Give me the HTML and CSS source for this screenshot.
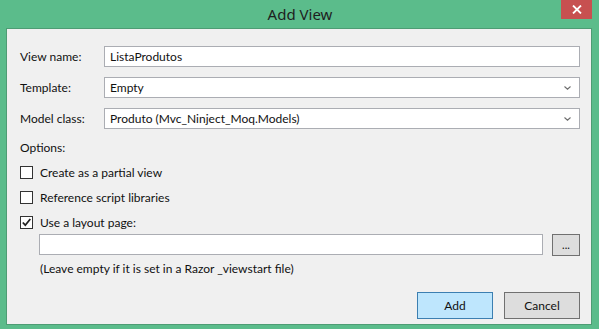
FILE: index.html
```html
<!DOCTYPE html>
<html>
<head>
<meta charset="utf-8">
<link rel="stylesheet" href="styles.css">
</head>
<body>
<div class="window">
  <div class="titlebar">
    <span></span>
    <span class="title">Add View</span>
    <span class="close-wrap"><span class="close"><svg width="10" height="9" viewBox="0 0 10 9"><path d="M1 0.5 L9 8.5 M9 0.5 L1 8.5" stroke="#fff" stroke-width="1.8"/></svg></span></span>
  </div>
  <div class="client">
    <div class="form-grid">
      <label class="lbl">View name:</label>
      <div class="field">ListaProdutos</div>
      <label class="lbl">Template:</label>
      <div class="field select">Empty<svg class="chev" width="7" height="4" viewBox="0 0 7 4"><path d="M0.5 0.5 L3.5 3.2 L6.5 0.5" fill="none" stroke="#6d6d6d" stroke-width="1.1"/></svg></div>
      <label class="lbl">Model class:</label>
      <div class="field select">Produto (Mvc_Ninject_Moq.Models)<svg class="chev" width="7" height="4" viewBox="0 0 7 4"><path d="M0.5 0.5 L3.5 3.2 L6.5 0.5" fill="none" stroke="#6d6d6d" stroke-width="1.1"/></svg></div>
    </div>
    <div class="options-label">Options:</div>
    <div class="checks">
      <div class="check-row"><span class="box"></span><span>Create as a partial view</span></div>
      <div class="check-row"><span class="box"></span><span>Reference script libraries</span></div>
      <div class="check-row"><span class="box"><svg width="11" height="11" viewBox="0 0 11 11"><path d="M1.8 5.5 L4.3 8.2 L9.3 2" fill="none" stroke="#222" stroke-width="1.8"/></svg></span><span>Use a layout page:</span></div>
    </div>
    <div class="layout-block">
      <div class="layout-row">
        <div class="field wide"></div>
        <div class="browse">...</div>
      </div>
      <div class="hint">(Leave empty if it is set in a Razor _viewstart file)</div>
    </div>
    <div class="buttons">
      <div class="btn primary">Add</div>
      <div class="btn">Cancel</div>
    </div>
  </div>
</div>
</body>
</html>
```
FILE: styles.css
```css
html, body {
  margin: 0;
  padding: 0;
}
body {
  width: 599px;
  height: 329px;
  background: #5bbc8b;
  font-family: "Lato", "Noto Sans", sans-serif;
  font-size: 12px;
  color: #111;
  overflow: hidden;
}
.window {
  display: flex;
  flex-direction: column;
}
.titlebar {
  height: 28px;
  display: grid;
  grid-template-columns: 1fr auto 1fr;
  align-items: start;
}
.title {
  font-family: "Noto Sans", sans-serif;
  font-size: 15px;
  line-height: 28px;
  color: #1e1e1e;
  padding-left: 1px;
}
.close-wrap {
  display: flex;
  justify-content: flex-end;
  padding-right: 7px;
}
.close {
  width: 31px;
  height: 19px;
  background: #c75050;
  display: flex;
  align-items: center;
  justify-content: center;
}
.client {
  margin: 0 7px 4px 6px;
  height: 297px;
  box-sizing: border-box;
  border: 1px solid #4e9c74;
  background: #f0f0f0;
  padding: 17px 11px 0 13px;
  display: flex;
  flex-direction: column;
}
.form-grid {
  display: grid;
  grid-template-columns: 84px 1fr;
  row-gap: 10px;
  align-items: center;
}
.lbl {
  line-height: 16px;
}
.field {
  height: 21px;
  box-sizing: border-box;
  border: 1px solid #abadb3;
  background: #fff;
  padding: 0 5px;
  line-height: 19px;
  display: flex;
  align-items: center;
}
.select {
  justify-content: space-between;
}
.chev {
  margin-right: 3px;
}
.options-label {
  margin-top: 11px;
  line-height: 16px;
}
.checks {
  margin-top: 10px;
  display: flex;
  flex-direction: column;
  gap: 12px;
}
.check-row {
  display: flex;
  align-items: center;
  gap: 7px;
  height: 13px;
}
.box {
  width: 13px;
  height: 13px;
  box-sizing: border-box;
  border: 1px solid #333;
  background: #fff;
  display: flex;
  align-items: center;
  justify-content: center;
}
.layout-block {
  padding-left: 19px;
  margin-top: 5px;
}
.layout-row {
  display: flex;
  align-items: flex-start;
  gap: 9px;
}
.wide {
  width: 504px;
}
.browse {
  width: 28px;
  height: 22px;
  box-sizing: border-box;
  border: 1px solid #707070;
  background: #dddddd;
  display: flex;
  align-items: center;
  justify-content: center;
  font-size: 11px;
  line-height: 1;
  padding-bottom: 2px;
}
.hint {
  margin-top: 5px;
  line-height: 16px;
  padding-left: 1px;
}
.buttons {
  margin-top: auto;
  margin-bottom: 5px;
  display: flex;
  justify-content: flex-end;
  gap: 11px;
}
.btn {
  width: 76px;
  height: 27px;
  box-sizing: border-box;
  border: 1px solid #707070;
  background: #dddddd;
  display: flex;
  align-items: center;
  justify-content: center;
}
.btn.primary {
  border-color: #3c7fb1;
  background: #bee6fd;
}
```
